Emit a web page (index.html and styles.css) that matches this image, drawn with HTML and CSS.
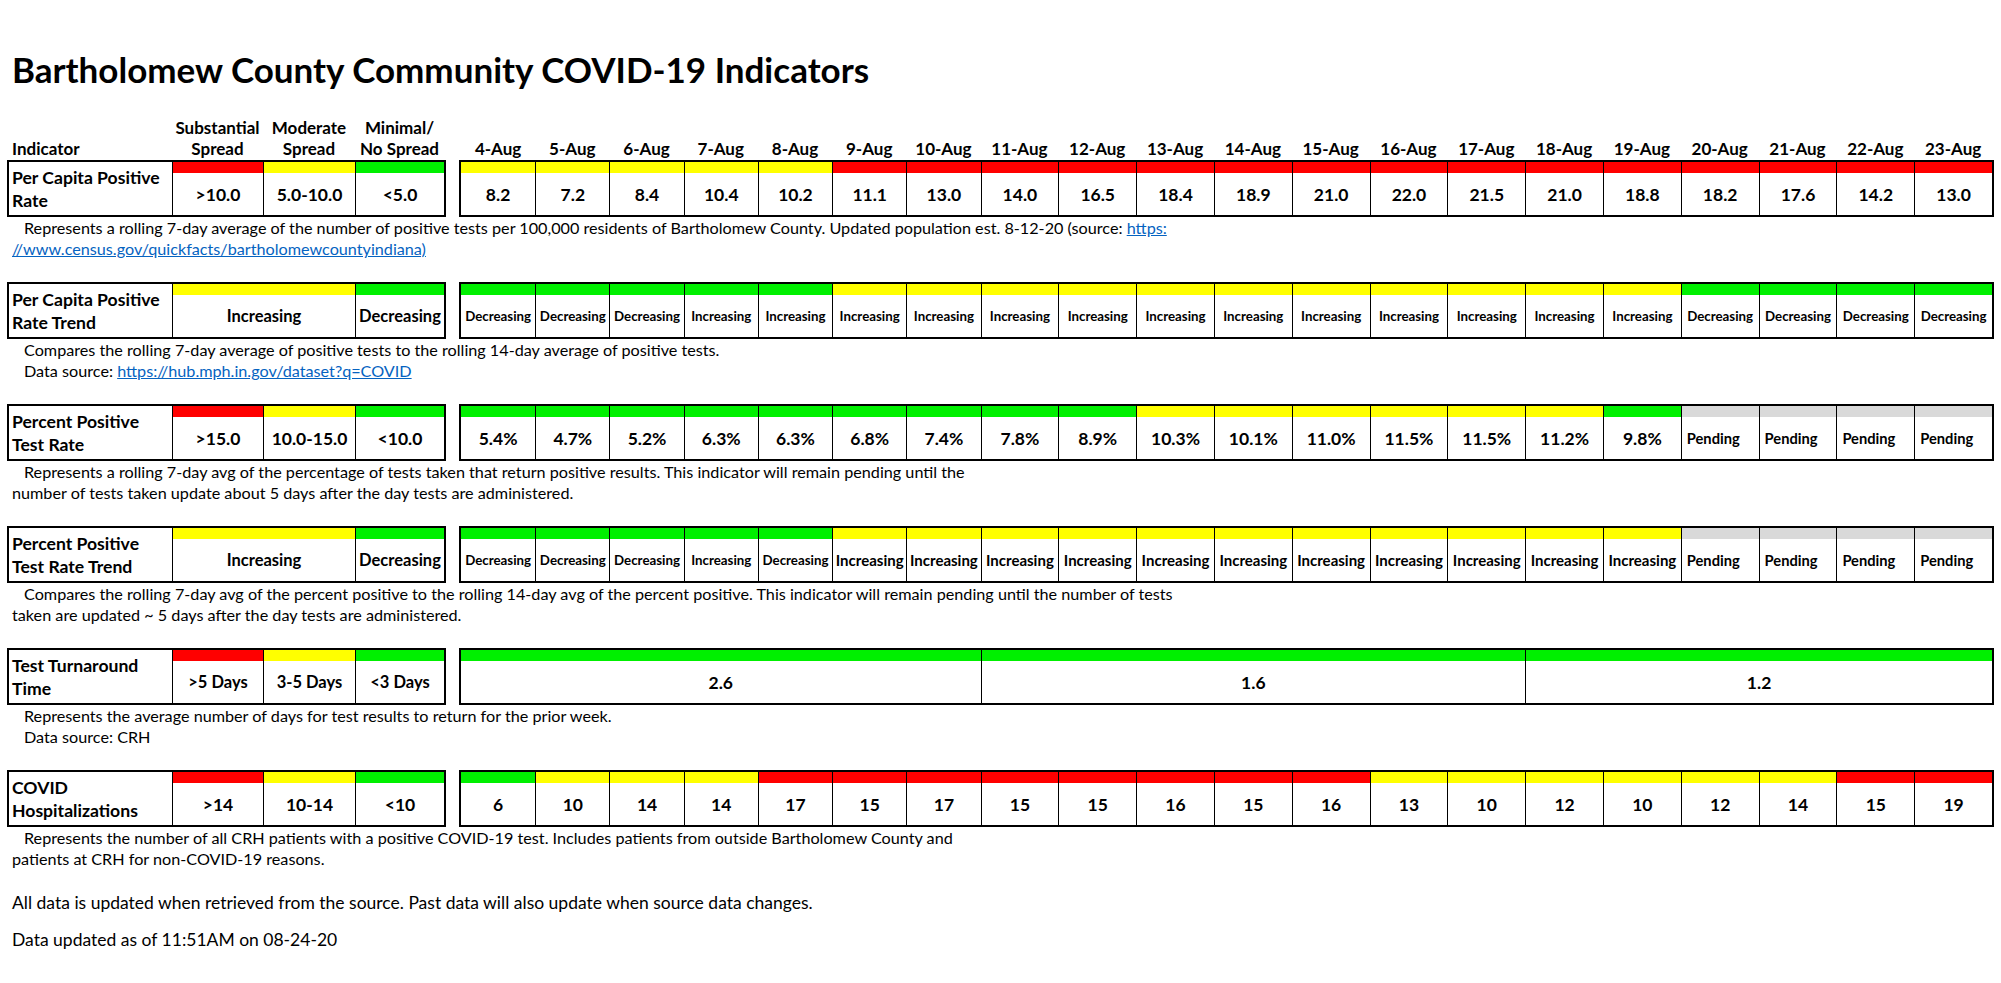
FILE: index.html
```html
<!DOCTYPE html>
<html lang="en">
<head>
<meta charset="utf-8">
<title>Bartholomew County Community COVID-19 Indicators</title>
<link rel="stylesheet" href="styles.css">
</head>
<body>
<div class="page">
  <h1 class="title">Bartholomew County Community COVID-19 Indicators</h1>

  <div class="hdr">
    <div class="lgrid">
      <div class="hcell label">Indicator</div>
      <div class="hcell">Substantial<br>Spread</div>
      <div class="hcell">Moderate<br>Spread</div>
      <div class="hcell">Minimal/<br>No Spread</div>
    </div>
    <div class="rgrid">
      <div class="hcell">4-Aug</div><div class="hcell">5-Aug</div><div class="hcell">6-Aug</div><div class="hcell">7-Aug</div><div class="hcell">8-Aug</div><div class="hcell">9-Aug</div><div class="hcell">10-Aug</div><div class="hcell">11-Aug</div><div class="hcell">12-Aug</div><div class="hcell">13-Aug</div><div class="hcell">14-Aug</div><div class="hcell">15-Aug</div><div class="hcell">16-Aug</div><div class="hcell">17-Aug</div><div class="hcell">18-Aug</div><div class="hcell">19-Aug</div><div class="hcell">20-Aug</div><div class="hcell">21-Aug</div><div class="hcell">22-Aug</div><div class="hcell">23-Aug</div>
    </div>
  </div>

  <!-- Per Capita Positive Rate -->
  <section class="ind">
    <div class="row">
      <div class="lgrid">
        <div class="lab">Per Capita Positive<br>Rate</div>
        <div class="cell"><i class="band red"></i><span class="val">&gt;10.0</span></div>
        <div class="cell"><i class="band yel"></i><span class="val">5.0-10.0</span></div>
        <div class="cell"><i class="band grn"></i><span class="val">&lt;5.0</span></div>
      </div>
      <div class="rgrid">
        <div class="cell"><i class="band yel"></i><span class="val">8.2</span></div>
        <div class="cell"><i class="band yel"></i><span class="val">7.2</span></div>
        <div class="cell"><i class="band yel"></i><span class="val">8.4</span></div>
        <div class="cell"><i class="band yel"></i><span class="val">10.4</span></div>
        <div class="cell"><i class="band yel"></i><span class="val">10.2</span></div>
        <div class="cell"><i class="band red"></i><span class="val">11.1</span></div>
        <div class="cell"><i class="band red"></i><span class="val">13.0</span></div>
        <div class="cell"><i class="band red"></i><span class="val">14.0</span></div>
        <div class="cell"><i class="band red"></i><span class="val">16.5</span></div>
        <div class="cell"><i class="band red"></i><span class="val">18.4</span></div>
        <div class="cell"><i class="band red"></i><span class="val">18.9</span></div>
        <div class="cell"><i class="band red"></i><span class="val">21.0</span></div>
        <div class="cell"><i class="band red"></i><span class="val">22.0</span></div>
        <div class="cell"><i class="band red"></i><span class="val">21.5</span></div>
        <div class="cell"><i class="band red"></i><span class="val">21.0</span></div>
        <div class="cell"><i class="band red"></i><span class="val">18.8</span></div>
        <div class="cell"><i class="band red"></i><span class="val">18.2</span></div>
        <div class="cell"><i class="band red"></i><span class="val">17.6</span></div>
        <div class="cell"><i class="band red"></i><span class="val">14.2</span></div>
        <div class="cell"><i class="band red"></i><span class="val">13.0</span></div>
      </div>
    </div>
    <div class="note">
      <p class="i1">Represents a rolling 7-day average of the number of positive tests per 100,000 residents of Bartholomew County. Updated population est. 8-12-20 (source: <a href="#">https:</a></p>
      <p class="i0"><a href="#">//www.census.gov/quickfacts/bartholomewcountyindiana)</a></p>
    </div>
  </section>

  <!-- Per Capita Positive Rate Trend -->
  <section class="ind">
    <div class="row">
      <div class="lgrid">
        <div class="lab">Per Capita Positive<br>Rate Trend</div>
        <div class="cell s2 trend"><i class="band yel"></i><span class="val">Increasing</span></div>
        <div class="cell trend"><i class="band grn"></i><span class="val">Decreasing</span></div>
      </div>
      <div class="rgrid sm">
        <div class="cell"><i class="band grn"></i><span class="val">Decreasing</span></div>
        <div class="cell"><i class="band grn"></i><span class="val">Decreasing</span></div>
        <div class="cell"><i class="band grn"></i><span class="val">Decreasing</span></div>
        <div class="cell"><i class="band grn"></i><span class="val">Increasing</span></div>
        <div class="cell"><i class="band grn"></i><span class="val">Increasing</span></div>
        <div class="cell"><i class="band yel"></i><span class="val">Increasing</span></div>
        <div class="cell"><i class="band yel"></i><span class="val">Increasing</span></div>
        <div class="cell"><i class="band yel"></i><span class="val">Increasing</span></div>
        <div class="cell"><i class="band yel"></i><span class="val">Increasing</span></div>
        <div class="cell"><i class="band yel"></i><span class="val">Increasing</span></div>
        <div class="cell"><i class="band yel"></i><span class="val">Increasing</span></div>
        <div class="cell"><i class="band yel"></i><span class="val">Increasing</span></div>
        <div class="cell"><i class="band yel"></i><span class="val">Increasing</span></div>
        <div class="cell"><i class="band yel"></i><span class="val">Increasing</span></div>
        <div class="cell"><i class="band yel"></i><span class="val">Increasing</span></div>
        <div class="cell"><i class="band yel"></i><span class="val">Increasing</span></div>
        <div class="cell"><i class="band grn"></i><span class="val">Decreasing</span></div>
        <div class="cell"><i class="band grn"></i><span class="val">Decreasing</span></div>
        <div class="cell"><i class="band grn"></i><span class="val">Decreasing</span></div>
        <div class="cell"><i class="band grn"></i><span class="val">Decreasing</span></div>
      </div>
    </div>
    <div class="note">
      <p class="i1">Compares the rolling 7-day average of positive tests to the rolling 14-day average of positive tests.</p>
      <p class="i1">Data source: <a href="#">https://hub.mph.in.gov/dataset?q=COVID</a></p>
    </div>
  </section>

  <!-- Percent Positive Test Rate -->
  <section class="ind">
    <div class="row">
      <div class="lgrid">
        <div class="lab">Percent Positive<br>Test Rate</div>
        <div class="cell"><i class="band red"></i><span class="val">&gt;15.0</span></div>
        <div class="cell"><i class="band yel"></i><span class="val">10.0-15.0</span></div>
        <div class="cell"><i class="band grn"></i><span class="val">&lt;10.0</span></div>
      </div>
      <div class="rgrid">
        <div class="cell"><i class="band grn"></i><span class="val">5.4%</span></div>
        <div class="cell"><i class="band grn"></i><span class="val">4.7%</span></div>
        <div class="cell"><i class="band grn"></i><span class="val">5.2%</span></div>
        <div class="cell"><i class="band grn"></i><span class="val">6.3%</span></div>
        <div class="cell"><i class="band grn"></i><span class="val">6.3%</span></div>
        <div class="cell"><i class="band grn"></i><span class="val">6.8%</span></div>
        <div class="cell"><i class="band grn"></i><span class="val">7.4%</span></div>
        <div class="cell"><i class="band grn"></i><span class="val">7.8%</span></div>
        <div class="cell"><i class="band grn"></i><span class="val">8.9%</span></div>
        <div class="cell"><i class="band yel"></i><span class="val">10.3%</span></div>
        <div class="cell"><i class="band yel"></i><span class="val">10.1%</span></div>
        <div class="cell"><i class="band yel"></i><span class="val">11.0%</span></div>
        <div class="cell"><i class="band yel"></i><span class="val">11.5%</span></div>
        <div class="cell"><i class="band yel"></i><span class="val">11.5%</span></div>
        <div class="cell"><i class="band yel"></i><span class="val">11.2%</span></div>
        <div class="cell"><i class="band grn"></i><span class="val">9.8%</span></div>
        <div class="cell pend"><i class="band gry"></i><span class="val">Pending</span></div>
        <div class="cell pend"><i class="band gry"></i><span class="val">Pending</span></div>
        <div class="cell pend"><i class="band gry"></i><span class="val">Pending</span></div>
        <div class="cell pend"><i class="band gry"></i><span class="val">Pending</span></div>
      </div>
    </div>
    <div class="note">
      <p class="i1">Represents a rolling 7-day avg of the percentage of tests taken that return positive results. This indicator will remain pending until the</p>
      <p class="i0">number of tests taken update about 5 days after the day tests are administered.</p>
    </div>
  </section>

  <!-- Percent Positive Test Rate Trend -->
  <section class="ind">
    <div class="row">
      <div class="lgrid">
        <div class="lab">Percent Positive<br>Test Rate Trend</div>
        <div class="cell s2 trend"><i class="band yel"></i><span class="val">Increasing</span></div>
        <div class="cell trend"><i class="band grn"></i><span class="val">Decreasing</span></div>
      </div>
      <div class="rgrid">
        <div class="cell sm"><i class="band grn"></i><span class="val">Decreasing</span></div>
        <div class="cell sm"><i class="band grn"></i><span class="val">Decreasing</span></div>
        <div class="cell sm"><i class="band grn"></i><span class="val">Decreasing</span></div>
        <div class="cell sm"><i class="band grn"></i><span class="val">Increasing</span></div>
        <div class="cell sm"><i class="band grn"></i><span class="val">Decreasing</span></div>
        <div class="cell md"><i class="band yel"></i><span class="val">Increasing</span></div>
        <div class="cell md"><i class="band yel"></i><span class="val">Increasing</span></div>
        <div class="cell md"><i class="band yel"></i><span class="val">Increasing</span></div>
        <div class="cell md"><i class="band yel"></i><span class="val">Increasing</span></div>
        <div class="cell md"><i class="band yel"></i><span class="val">Increasing</span></div>
        <div class="cell md"><i class="band yel"></i><span class="val">Increasing</span></div>
        <div class="cell md"><i class="band yel"></i><span class="val">Increasing</span></div>
        <div class="cell md"><i class="band yel"></i><span class="val">Increasing</span></div>
        <div class="cell md"><i class="band yel"></i><span class="val">Increasing</span></div>
        <div class="cell md"><i class="band yel"></i><span class="val">Increasing</span></div>
        <div class="cell md"><i class="band yel"></i><span class="val">Increasing</span></div>
        <div class="cell pend"><i class="band gry"></i><span class="val">Pending</span></div>
        <div class="cell pend"><i class="band gry"></i><span class="val">Pending</span></div>
        <div class="cell pend"><i class="band gry"></i><span class="val">Pending</span></div>
        <div class="cell pend"><i class="band gry"></i><span class="val">Pending</span></div>
      </div>
    </div>
    <div class="note">
      <p class="i1">Compares the rolling 7-day avg of the percent positive to the rolling 14-day avg of the percent positive. This indicator will remain pending until the number of tests</p>
      <p class="i0">taken are updated ~ 5 days after the day tests are administered.</p>
    </div>
  </section>

  <!-- Test Turnaround Time -->
  <section class="ind">
    <div class="row">
      <div class="lgrid">
        <div class="lab">Test Turnaround<br>Time</div>
        <div class="cell trend"><i class="band red"></i><span class="val">&gt;5 Days</span></div>
        <div class="cell trend"><i class="band yel"></i><span class="val">3-5 Days</span></div>
        <div class="cell trend"><i class="band grn"></i><span class="val">&lt;3 Days</span></div>
      </div>
      <div class="rgrid">
        <div class="cell s7"><i class="band grn"></i><span class="val">2.6</span></div>
        <div class="cell s7"><i class="band grn"></i><span class="val">1.6</span></div>
        <div class="cell s6"><i class="band grn"></i><span class="val">1.2</span></div>
      </div>
    </div>
    <div class="note">
      <p class="i1">Represents the average number of days for test results to return for the prior week.</p>
      <p class="i1">Data source: CRH</p>
    </div>
  </section>

  <!-- COVID Hospitalizations -->
  <section class="ind">
    <div class="row">
      <div class="lgrid">
        <div class="lab">COVID<br>Hospitalizations</div>
        <div class="cell"><i class="band red"></i><span class="val">&gt;14</span></div>
        <div class="cell"><i class="band yel"></i><span class="val">10-14</span></div>
        <div class="cell"><i class="band grn"></i><span class="val">&lt;10</span></div>
      </div>
      <div class="rgrid">
        <div class="cell"><i class="band grn"></i><span class="val">6</span></div>
        <div class="cell"><i class="band yel"></i><span class="val">10</span></div>
        <div class="cell"><i class="band yel"></i><span class="val">14</span></div>
        <div class="cell"><i class="band yel"></i><span class="val">14</span></div>
        <div class="cell"><i class="band red"></i><span class="val">17</span></div>
        <div class="cell"><i class="band red"></i><span class="val">15</span></div>
        <div class="cell"><i class="band red"></i><span class="val">17</span></div>
        <div class="cell"><i class="band red"></i><span class="val">15</span></div>
        <div class="cell"><i class="band red"></i><span class="val">15</span></div>
        <div class="cell"><i class="band red"></i><span class="val">16</span></div>
        <div class="cell"><i class="band red"></i><span class="val">15</span></div>
        <div class="cell"><i class="band red"></i><span class="val">16</span></div>
        <div class="cell"><i class="band yel"></i><span class="val">13</span></div>
        <div class="cell"><i class="band yel"></i><span class="val">10</span></div>
        <div class="cell"><i class="band yel"></i><span class="val">12</span></div>
        <div class="cell"><i class="band yel"></i><span class="val">10</span></div>
        <div class="cell"><i class="band yel"></i><span class="val">12</span></div>
        <div class="cell"><i class="band yel"></i><span class="val">14</span></div>
        <div class="cell"><i class="band red"></i><span class="val">15</span></div>
        <div class="cell"><i class="band red"></i><span class="val">19</span></div>
      </div>
    </div>
    <div class="note">
      <p class="i1">Represents the number of all CRH patients with a positive COVID-19 test. Includes patients from outside Bartholomew County and</p>
      <p class="i0">patients at CRH for non-COVID-19 reasons.</p>
    </div>
  </section>

  <div class="foot">
    <p>All data is updated when retrieved from the source. Past data will also update when source data changes.</p>
    <p class="second">Data updated as of 11:51AM on 08-24-20</p>
  </div>
</div>
</body>
</html>
```

FILE: styles.css
```css
* { box-sizing: border-box; }

body {
  margin: 0;
  background: #fff;
  color: #000;
  font-family: Lato, "Liberation Sans", sans-serif;
}

.page {
  padding: 49px 0 0 7px;
}

.title {
  margin: 0 0 21px;
  padding-left: 5px;
  font-size: 35px;
  line-height: 40px;
  font-weight: 700;
}

/* header row */
.hdr {
  display: flex;
  gap: 13px;
  height: 50px;
}

.lgrid {
  width: 439px;
  display: grid;
  grid-template-columns: 163px 91px 92px 89px;
  border: 2px solid #000;
}

.rgrid {
  width: 1535px;
  display: grid;
  grid-template-columns: repeat(7, 74.4fr) repeat(13, 78fr);
  border: 2px solid #000;
}

.hdr .lgrid,
.hdr .rgrid {
  border-color: transparent;
  border-top: 0;
  border-bottom: 0;
}

.hcell {
  display: flex;
  align-items: flex-end;
  justify-content: center;
  text-align: center;
  font-weight: 700;
  font-size: 17px;
  line-height: 21px;
  padding-bottom: 1px;
}

.hcell.label {
  justify-content: flex-start;
  padding-left: 3px;
}

/* indicator sections */
.ind {
  margin-bottom: 23px;
}

.row {
  display: flex;
  gap: 13px;
  height: 57px;
}

.lab {
  display: flex;
  align-items: center;
  padding-left: 3px;
  font-weight: 700;
  font-size: 17.6px;
  line-height: 23px;
}

.cell {
  display: flex;
  flex-direction: column;
  border-left: 1px solid #000;
  min-width: 0;
}

.rgrid > .cell:first-child {
  border-left: 0;
}

.band {
  display: block;
  height: 11px;
  flex: none;
}

.val {
  flex: 1;
  display: flex;
  align-items: center;
  justify-content: center;
  font-weight: 700;
  font-size: 17.5px;
  white-space: nowrap;
}

.s2 { grid-column: span 2; }
.s6 { grid-column: span 6; }
.s7 { grid-column: span 7; }

.trend .val { font-size: 16.5px; }
.sm .val { font-size: 13.3px; }
.md .val { font-size: 15px; }
.pend .val {
  justify-content: flex-start;
  padding-left: 5px;
  font-size: 14.7px;
}

.red { background: #ff0000; }
.yel { background: #ffff00; }
.grn { background: #00f000; }
.gry { background: #d9d9d9; }

/* notes */
.note {
  font-size: 16.2px;
  line-height: 21px;
}

.note p {
  margin: 0;
  white-space: nowrap;
}

.i1 { padding-left: 17px; }
.i0 { padding-left: 5px; }

a {
  color: #0563c1;
  text-decoration: underline;
}

/* footer */
.foot p {
  margin: 0;
  padding-left: 5px;
  font-size: 17.5px;
  line-height: 21px;
}

.foot .second {
  margin-top: 16px;
}
```
